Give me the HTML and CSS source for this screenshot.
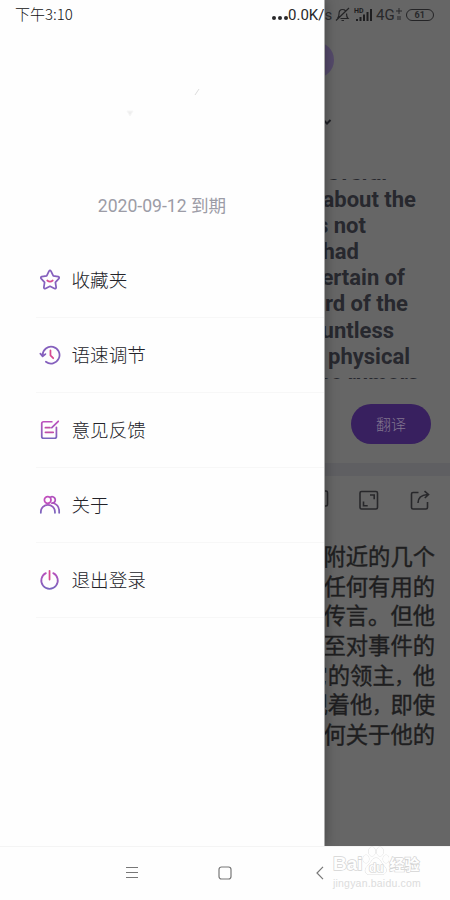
FILE: index.html
```html
<!DOCTYPE html>
<html lang="zh-CN">
<head>
<meta charset="utf-8">
<title>翻译</title>
<link rel="stylesheet" href="styles.css">
</head>
<body>
<div class="phone">
  <main class="app">
    <div class="top">
      <span class="dot"></span>
      <svg class="chev" width="10" height="8" viewBox="0 0 10 8"><path d="M1.5 2 5 5.5 8.5 2"/></svg>
    </div>
    <div class="source">
      <p class="e1">several</p>
      <p class="e2">about the</p>
      <p class="e3">was not</p>
      <p class="e4">had</p>
      <p class="e5">certain of</p>
      <p class="e6">lord of the</p>
      <p class="e7">countless</p>
      <p class="e8">physical</p>
      <p class="e9">the rumors</p>
    </div>
    <div class="action"><button class="go">翻译</button></div>
    <div class="band"></div>
    <div class="tools">
      <svg width="20" height="20" viewBox="0 0 20 20"><rect x="1.5" y="1" width="16" height="15" rx="1.5"/></svg>
      <svg width="20" height="20" viewBox="0 0 20 20"><rect x="1" y="1.5" width="17.5" height="17.5" rx="1.5"/><path d="M11 5h4.2v4.2M4.5 11.5v4.2h4.2"/></svg>
      <svg width="20" height="20" viewBox="0 0 20 20"><path d="M8.5 2.5H3A1.5 1.5 0 0 0 1.5 4v13.500A1.500 1.500 0 0 0 3 19h13a1.500 1.500 0 0 0 1.500-1.500V12M8 13c0-5 3-8 9.500-8.500M14.500 1.200l4 3.300-3.700 3.500"/></svg>
    </div>
    <div class="result">
      <p>附近的几个</p>
      <p>任何有用的</p>
      <p>传言。但他</p>
      <p>至对事件的</p>
      <p>它的领主<i>，</i>他</p>
      <p>视着他<i>，</i>即使</p>
      <p>何关于他的</p>
    </div>
  </main>

  <aside class="drawer">
    <div class="profile">
      <svg width="100" height="40" viewBox="0 0 100 40"><path d="m75 15 4-6" stroke="#ddd"/><path d="m7 31 3 5 3-5z" fill="#eee" stroke="#f6f6f6"/></svg>
      <span class="expiry">2020-09-12 到期</span>
    </div>
    <nav class="menu">
      <svg class="defs" width="0" height="0"><defs><linearGradient id="g" gradientUnits="userSpaceOnUse" x1="12" y1="2" x2="12" y2="22"><stop offset="0" stop-color="#c04fbd"/><stop offset="1" stop-color="#7665bd"/></linearGradient></defs></svg>
      <a class="item"><svg viewBox="0 0 24 24"><path stroke="#8560bd" d="M10.900 2.400Q12 .8 13.100 2.400L15.600 7.400 21 8.300Q22.700 9 21.600 10.500L17.900 14.500 18.700 20Q18.600 21.900 16.800 21.300L12 18.900 7.200 21.300Q5.400 21.900 5.300 20L6.100 14.500 2.400 10.500Q1.300 9 3 8.300L8.400 7.400Z"/><path stroke="#d64b91" d="M9 12.500q3 2.500 6 0"/></svg><span>收藏夹</span></a>
      <a class="item"><svg viewBox="0 0 24 24"><path stroke="#8560bd" d="M4 12a9.200 9.200 0 1 1 3.500 7.300M1.500 10.500l2.500 3 3-2.500"/><path stroke="#d64b91" d="M12.500 7v5.500l3 3"/></svg><span>语速调节</span></a>
      <a class="item"><svg viewBox="0 0 24 24"><path stroke="url(#g)" d="M14 3H5Q3 3 3 5v14q0 2 2 2h12q2 0 2-2V9M21 2.500 14 9.500"/><path stroke="#c04fa8" d="M7 9.500h5M7 14.500h8.500"/></svg><span>意见反馈</span></a>
      <a class="item"><svg viewBox="0 0 24 24"><path stroke="url(#g)" d="M2 20.500v-1a7.700 7.700 0 0 1 15.400 0v1M15.500 9.800q6.500 2 6.500 9.200v1.500"/><circle cx="9.500" cy="6.500" r="3.600" stroke="#c04fbd"/><path stroke="#b050bd" d="M12.500 3.500a3.500 3.500 0 1 1 1.500 6.500"/></svg><span>关于</span></a>
      <a class="item"><svg viewBox="0 0 24 24"><path stroke="url(#g)" d="M7.500 4.500a9 9 0 1 0 8 0"/><path stroke="#d64b91" d="M11.500 2v9.500"/></svg><span>退出登录</span></a>
    </nav>
  </aside>

  <header class="status">
    <span class="time">下午3:10</span>
    <span class="more"><b></b><b></b><b></b></span>
    <span class="speed">0.0K/s</span>
    <svg class="bell" width="15" height="15" viewBox="0 0 15 15"><path d="M1 13.500 14 1M2.500 11.500Q4 10 4 7q0-4.500 3.500-4.500 2 0 2.800 1.200M11.500 6.500q0 3.500 1.500 5H5.500M6.500 13.500h2.500"/></svg>
    <svg class="signal" width="20" height="16" viewBox="0 0 20 16"><text x="0" y="5.800">HD</text><path d="M3 14v-2M6.500 14v-4M10 14V7.500M13.500 14V5M17 14V2"/></svg>
    <span class="net">4G</span>
    <svg class="plus" width="6" height="14" viewBox="0 0 6 14"><path d="M3 0v6M0 3h6M2 8v4M4 8v4"/></svg>
    <span class="battery">61</span>
  </header>

  <footer class="navbar">
    <svg class="n1" width="14" height="14" viewBox="0 0 14 14"><path d="M1 1.500h12M1 6.500h12M1 11.500h12"/></svg>
    <svg class="n2" width="14" height="14" viewBox="0 0 14 14"><rect x="1" y="1" width="12" height="12" rx="2.500"/></svg>
    <svg class="n3" width="8" height="14" viewBox="0 0 8 14"><path d="M7 .8 1 7l6 6.200"/></svg>
  </footer>
  <div class="mark">
    <div class="brand"><span>Bai</span><svg width="27" height="30" viewBox="0 0 27 30"><ellipse cx="4" cy="13" rx="3" ry="4"/><ellipse cx="10" cy="5.500" rx="3.200" ry="4.500"/><ellipse cx="18" cy="5.500" rx="3.200" ry="4.500"/><ellipse cx="24" cy="13" rx="3" ry="4"/><path d="M14 12c4 0 5 5 9 9 3 4 0 8-4 7.500H8C3 29 2 24 5 20.500c4-3 5-8.500 9-8.500Z"/><text x="7" y="26">du</text></svg><span class="jy">经验</span></div>
    <div class="url">jingyan.baidu.com</div>
  </div>
</div>
</body>
</html>
```
FILE: styles.css
```css
* { box-sizing: border-box; }
body { margin: 0; font-family: Roboto, "Noto Sans CJK SC", sans-serif; }
p { margin: 0; }
svg { fill: none; flex: none; }
.phone { position: relative; width: 450px; height: 900px; overflow: hidden; background: #fefefe; }

.app { height: 846px; background: #666; display: flex; flex-direction: column; }
.top { height: 179px; padding: 42px 0 0 298px; }
.dot { display: block; width: 36px; height: 36px; border-radius: 50%; background: #554a6b; }
.chev { display: block; margin: 40px 0 0 24px; stroke: #202126; stroke-width: 2; }
.source { height: 200px; overflow: hidden; text-align: right; font-weight: 700; font-size: 22px; line-height: 26.2px; color: #27282e; }
.source p { white-space: nowrap; }
.source .e1 { margin-top: -18.600px; padding-right: 63px; }
.e2 { padding-right: 34px; }
.e3 { padding-right: 84px; }
.e4 { padding-right: 91px; }
.e5 { padding-right: 45px; }
.e6 { padding-right: 42px; }
.e7 { padding-right: 56px; }
.e8 { padding-right: 40px; }
.e9 { padding-right: 31px; }
.action { height: 84px; padding: 25px 19px 0 0; display: flex; justify-content: flex-end; align-items: flex-start; }
.go { width: 80px; height: 40px; padding: 0 0 1px; border: 0; border-radius: 20px; background: #38205f; color: #81758f; font: 300 15px "Noto Sans CJK SC", sans-serif; }
.band { height: 13px; background: #5f5f62; }
.tools { height: 65px; padding: 14px 20px 0 0; display: flex; justify-content: flex-end; gap: 31px; stroke: #28282b; stroke-width: 1.600; }
.tools svg:first-child { margin-right: -2px; }
.result { text-align: right; padding-right: 15px; font: 400 22.300px/29.700px "Noto Sans CJK SC", sans-serif; color: #1e1e20; -webkit-text-stroke: .4px #1e1e20; }
.result p { height: 29.700px; white-space: nowrap; }
.result i { font-style: normal; font-size: 18px; line-height: 1; }

.drawer { position: absolute; left: 0; top: 0; width: 325px; height: 846px; background: #fefefe; border-right: 1px solid #aaa; box-shadow: 0 0 12px rgba(0,0,0,.35); }
.profile { height: 243px; padding-top: 80px; display: flex; flex-direction: column; align-items: center; }
.profile svg { margin-left: 15px; }
.expiry { margin-top: 73px; font-size: 17.600px; line-height: 26px; color: #9c9ca6; white-space: nowrap; }
.menu { padding-left: 36px; }
.defs { position: absolute; }
.item { height: 75px; display: flex; align-items: center; gap: 11px; padding: 0 0 1px 3px; border-bottom: 1px solid #f7f7f7; font: 300 18.600px/28px "Noto Sans CJK SC", sans-serif; color: #222228; }
.item span { margin: -1px 0 1px -.5px; }
.item svg { width: 22px; height: 22px; stroke-width: 1.900; stroke-linecap: round; stroke-linejoin: round; }

.status { position: absolute; left: 0; top: 0; width: 450px; height: 29px; display: flex; align-items: center; padding-left: 15px; color: #29292b; font-size: 15px; white-space: nowrap; }
.time { width: 257px; margin-top: -2px; font-family: "Noto Sans CJK SC", sans-serif; font-weight: 300; color: #111; }
.more { display: flex; gap: 2px; width: 16px; padding-top: 6px; }
.more b { width: 4px; height: 4px; border-radius: 50%; background: #29292b; }
.speed { width: 47px; }
.bell { stroke: #242426; stroke-width: 1.200; }
.signal { margin-left: 4px; stroke: #1e1e20; stroke-width: 2; }
.signal text { font: 700 7px Roboto, sans-serif; fill: #1e1e20; stroke: none; }
.net { margin-left: 2px; }
.plus { margin-left: 1px; stroke: #29292b; stroke-width: 1; }
.battery { margin-left: 4px; width: 28px; height: 12px; border: 1px solid #242426; border-radius: 6px; font-size: 9px; font-weight: 700; line-height: 10px; text-align: center; }

.navbar { position: relative; height: 54px; background: #fefefe; border-top: 1px solid #f4f4f4; display: flex; align-items: center; padding: 0 0 2px 125px; stroke: #777; stroke-width: 1.200; }
.n2 { margin-left: 79px; }
.n3 { margin-left: 84px; }
.mark { position: absolute; left: 333px; top: 846px; width: 92px; color: #fefefe; -webkit-text-stroke: 1.400px #d4d4d4; paint-order: stroke fill; }
.brand { display: flex; align-items: flex-end; height: 30px; font: 700 19px/25px "Liberation Sans", sans-serif; }
.brand svg { margin-left: -1px; fill: #fefefe; stroke: #d4d4d4; stroke-width: .8; }
.brand text { font: 700 12px "Liberation Sans", sans-serif; -webkit-text-stroke: 0; stroke: #d0d0d0; stroke-width: 1.200px; }
.jy { font: 700 15px/25px "Noto Sans CJK SC", sans-serif; margin-left: 1px; }
.url { font: 10.500px/12px "Liberation Sans", sans-serif; color: #dcdcdc; -webkit-text-stroke: 0; margin-top: 1px; letter-spacing: .2px; }
```
